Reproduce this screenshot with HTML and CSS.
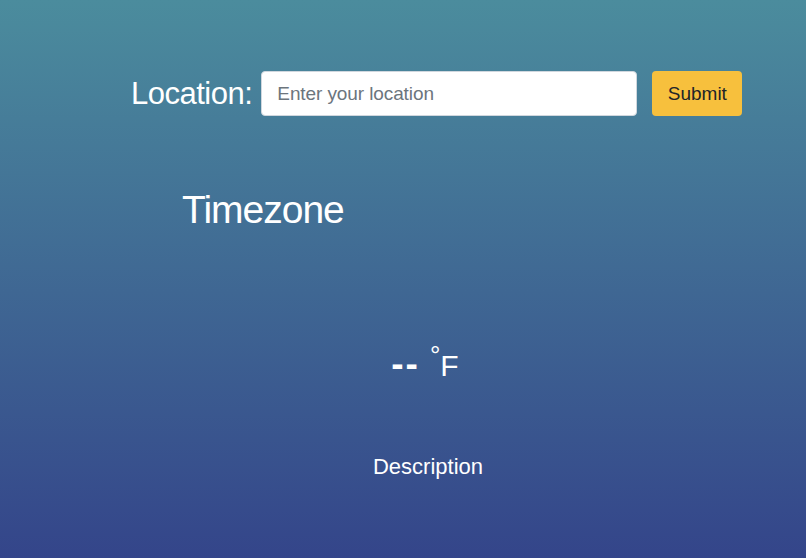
FILE: index.html
```html
<!DOCTYPE html>
<html>
<head>
<meta charset="utf-8">
<link rel="stylesheet" href="styles.css">
</head>
<body>
<div class="page">
  <form class="search">
    <label class="search-label" for="loc">Location:</label>
    <input id="loc" class="search-input" type="text" placeholder="Enter your location">
    <button class="search-btn" type="button">Submit</button>
  </form>
  <h1 class="timezone">Timezone</h1>
  <div class="temp"><span class="temp-value">--</span><span class="temp-unit"><sup class="deg">°</sup>F</span></div>
  <div class="desc">Description</div>
</div>
</body>
</html>
```
FILE: styles.css
```css
html, body {
  margin: 0;
  height: 100%;
}
body {
  font-family: "Liberation Sans", Arial, sans-serif;
  color: #fff;
  background: linear-gradient(to bottom, #4b8c9d 0%, #34458a 100%);
}
.page {
  height: 558px;
  display: flex;
  flex-direction: column;
}
.search {
  display: flex;
  align-items: center;
  margin: 71px 0 0 131px;
}
.search-label {
  font-size: 31px;
  letter-spacing: -0.5px;
  margin-right: 9px;
}
.search-input {
  box-sizing: border-box;
  width: 376px;
  height: 45px;
  border: 1px solid #d0d7de;
  border-radius: 4px;
  padding: 0 15px;
  font-family: "Liberation Sans", Arial, sans-serif;
  font-size: 19px;
  letter-spacing: -0.1px;
  color: #333;
  background: #fff;
}
.search-input::placeholder {
  color: #6c757d;
}
.search-btn {
  box-sizing: border-box;
  margin-left: 15px;
  width: 90px;
  height: 45px;
  border: none;
  border-radius: 4px;
  background: #f7c03d;
  color: #212529;
  font-family: "Liberation Sans", Arial, sans-serif;
  font-size: 19px;
}
.timezone {
  margin: 72px 0 0 182px;
  font-size: 39px;
  letter-spacing: -1px;
  font-weight: normal;
}
.temp {
  margin-top: 108px;
  align-self: center;
  margin-left: 44px;
  display: flex;
  align-items: baseline;
  gap: 10px;
}
.temp-value {
  font-size: 37px;
  font-weight: bold;
  letter-spacing: 2px;
}
.temp-unit {
  font-size: 30px;
}
.deg {
  font-size: 26px;
  vertical-align: 12px;
}
.desc {
  margin-top: 69px;
  align-self: center;
  margin-left: 50px;
  font-size: 22px;
}
```
